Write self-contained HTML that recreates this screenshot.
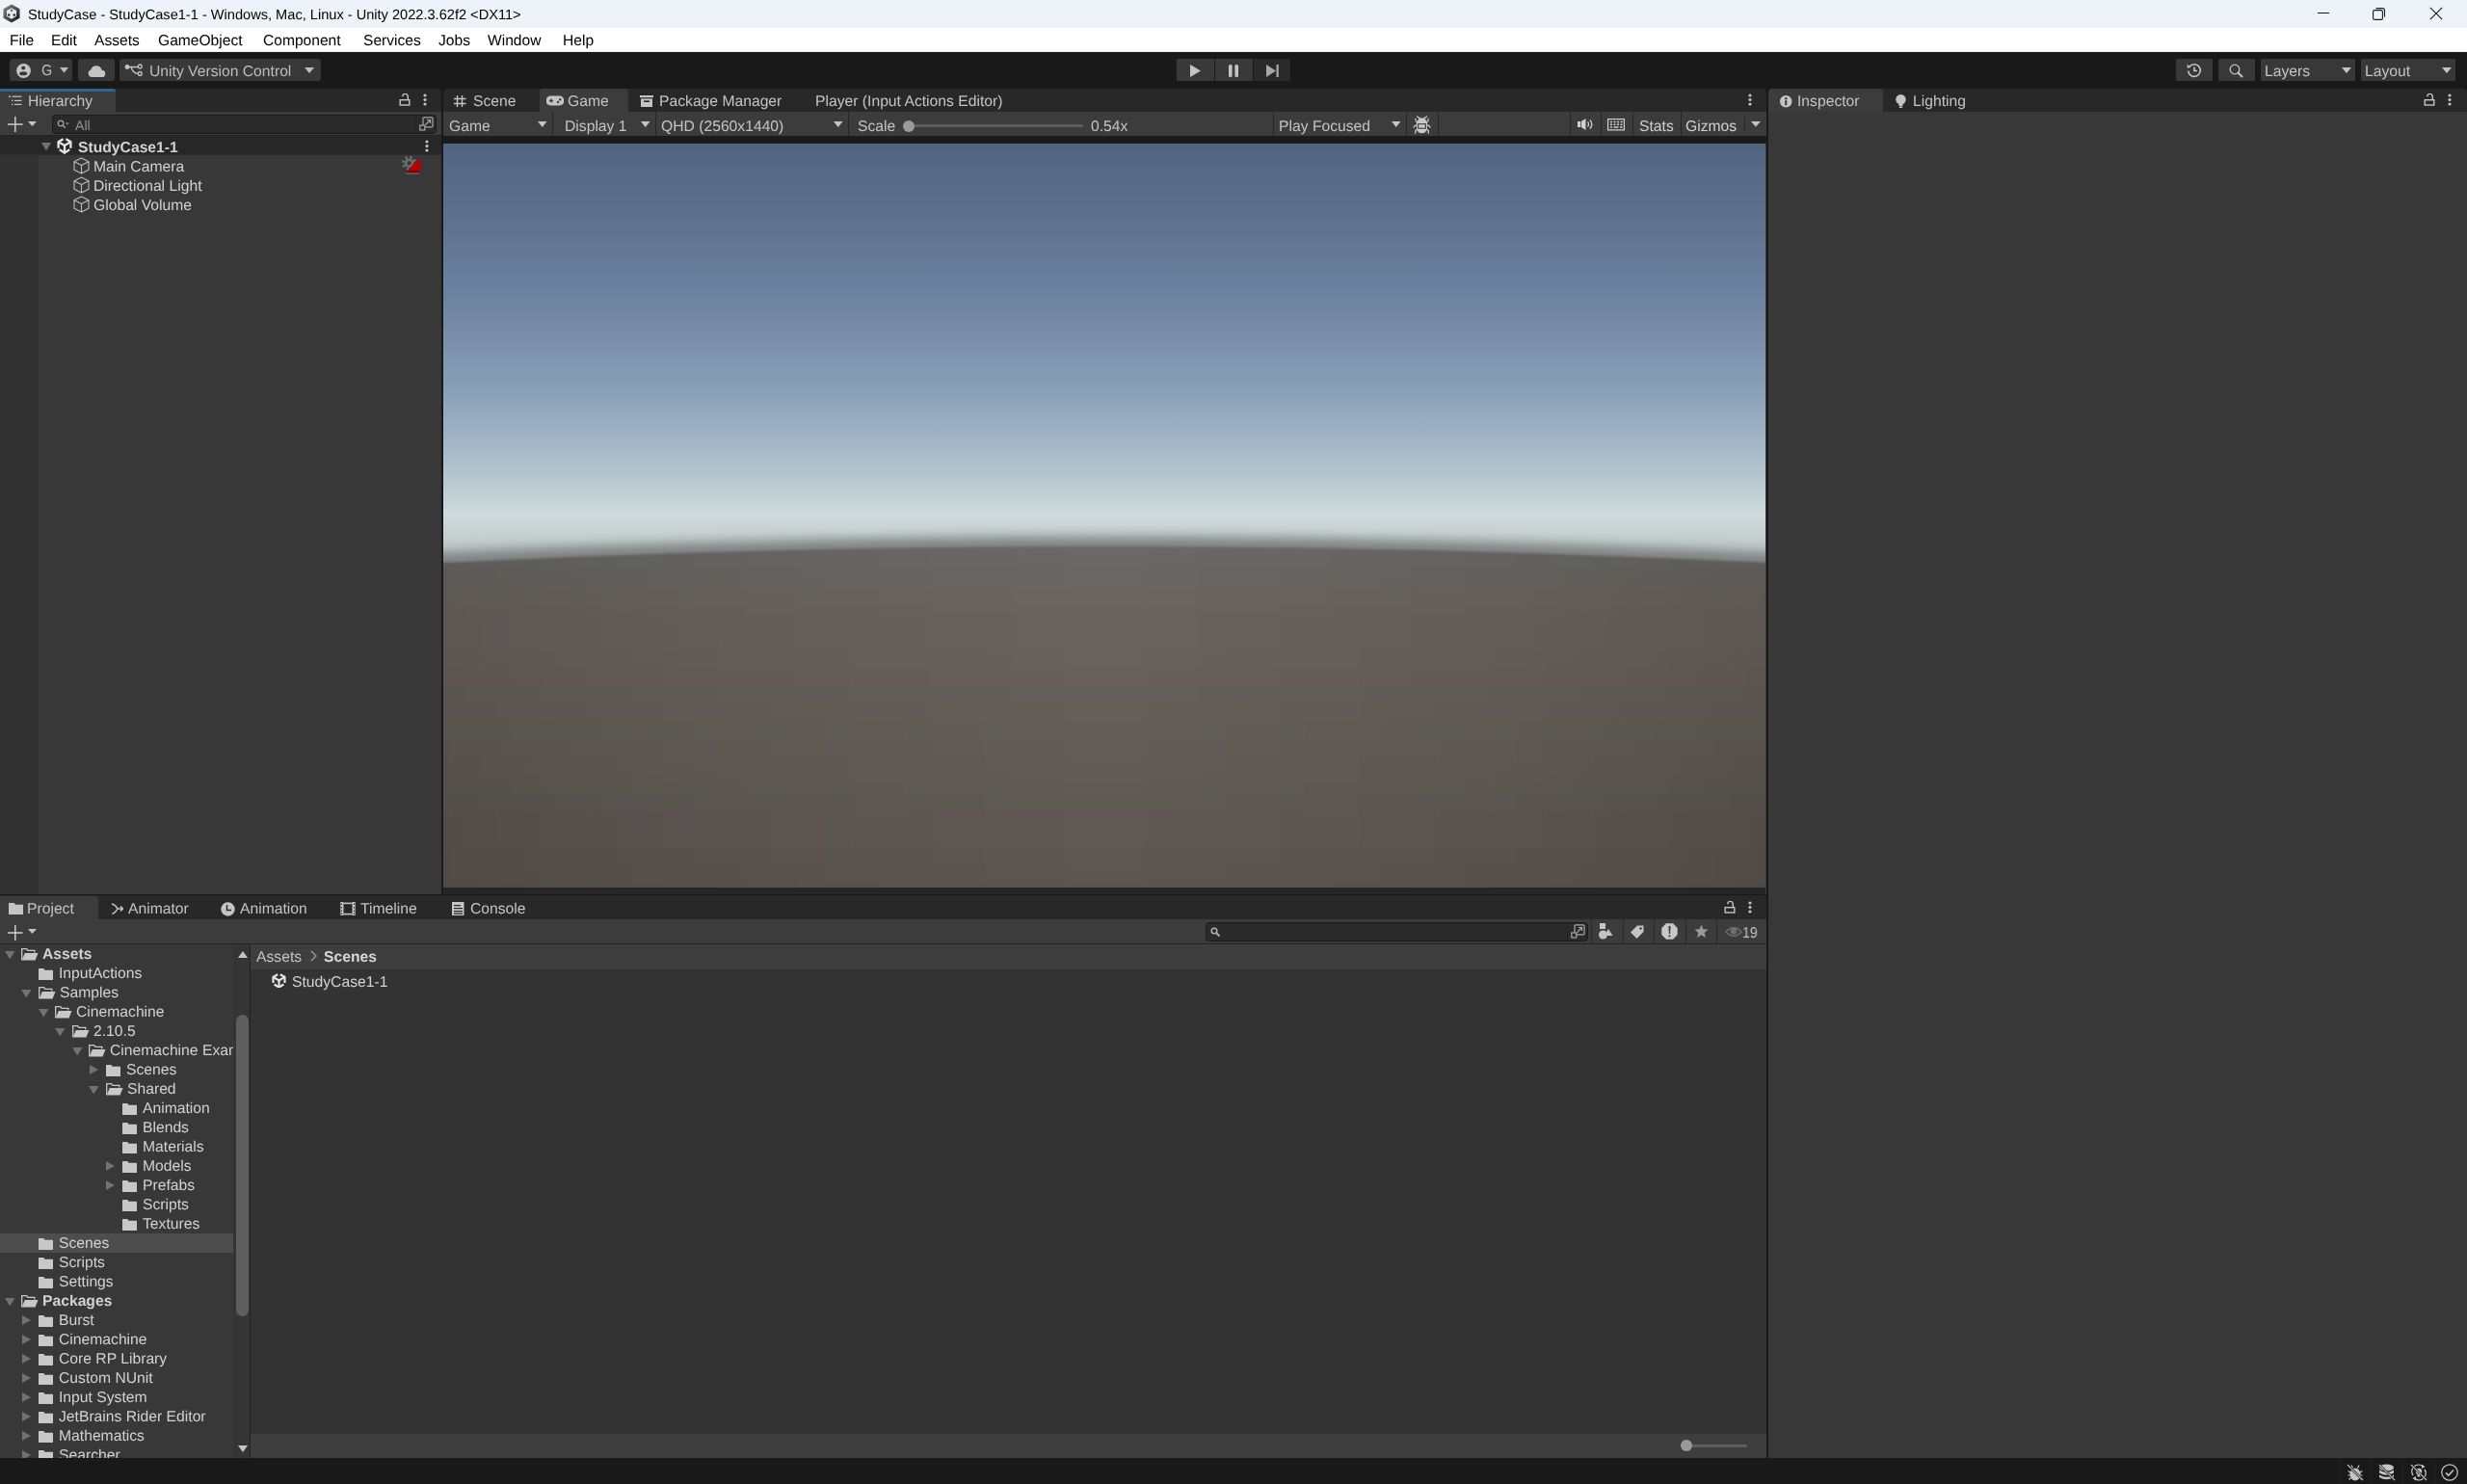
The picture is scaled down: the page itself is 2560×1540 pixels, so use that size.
<!DOCTYPE html><html><head><meta charset="utf-8"><title>Unity</title><style>
html,body{margin:0;padding:0;}
body{width:2560px;height:1540px;position:relative;overflow:hidden;background:#191919;font-family:"Liberation Sans",sans-serif;}
div,svg{position:absolute;box-sizing:border-box;}
.t{white-space:nowrap;text-rendering:geometricPrecision;will-change:transform;}
</style></head><body>
<div style="left:0px;top:0px;width:2560px;height:29px;background:#edf3f8;"></div>
<svg style="left:3px;top:4px;" width="18" height="20" viewBox="0 0 18 20"><defs><linearGradient id="lg" x1="0" y1="0" x2="1" y2="1"><stop offset="0" stop-color="#8a8a8a"/><stop offset="1" stop-color="#111"/></linearGradient></defs><path d="M9 0.5L17.5 5.3V14.7L9 19.5L0.5 14.7V5.3Z" fill="url(#lg)"/><path d="M9 4.2L14 7V12.8L9 15.7L4 12.8V7Z" fill="#e8e8e8"/><circle cx="9" cy="6.8" r="1.2" fill="#666"/><circle cx="6.2" cy="11.6" r="1.3" fill="#333"/><circle cx="11.8" cy="11.6" r="1.3" fill="#333"/></svg>
<div class="t" style="left:29px;top:1.5px;height:29px;line-height:29px;font-size:14.6px;color:#000;font-weight:normal;">StudyCase - StudyCase1-1 - Windows, Mac, Linux - Unity 2022.3.62f2 &lt;DX11&gt;</div>
<div style="left:2405px;top:13px;width:12px;height:1px;background:#1a1a1a;"></div>
<svg style="left:2462px;top:7px;" width="14" height="14" viewBox="0 0 14 14"><rect x="0.6" y="3.6" width="9.8" height="9.8" rx="1.5" fill="none" stroke="#1a1a1a" stroke-width="1.1"/><path d="M3.5 1.6H10.5A2 2 0 0 1 12.5 3.6V10.6" fill="none" stroke="#1a1a1a" stroke-width="1.1"/></svg>
<svg style="left:2521px;top:7px;" width="14" height="14" viewBox="0 0 14 14"><path d="M0.8 0.8L13.2 13.2M13.2 0.8L0.8 13.2" stroke="#1a1a1a" stroke-width="1.1"/></svg>
<div style="left:0px;top:29px;width:2560px;height:24px;background:#ffffff;"></div>
<div style="left:0px;top:53px;width:2560px;height:1px;background:#f0f0f0;"></div>
<div class="t" style="left:10px;top:30.5px;height:24px;line-height:24px;font-size:15.6px;color:#000;font-weight:normal;">File</div>
<div class="t" style="left:52.5px;top:30.5px;height:24px;line-height:24px;font-size:15.6px;color:#000;font-weight:normal;">Edit</div>
<div class="t" style="left:98px;top:30.5px;height:24px;line-height:24px;font-size:15.6px;color:#000;font-weight:normal;">Assets</div>
<div class="t" style="left:163.5px;top:30.5px;height:24px;line-height:24px;font-size:15.6px;color:#000;font-weight:normal;">GameObject</div>
<div class="t" style="left:272.5px;top:30.5px;height:24px;line-height:24px;font-size:15.6px;color:#000;font-weight:normal;">Component</div>
<div class="t" style="left:377px;top:30.5px;height:24px;line-height:24px;font-size:15.6px;color:#000;font-weight:normal;">Services</div>
<div class="t" style="left:455px;top:30.5px;height:24px;line-height:24px;font-size:15.6px;color:#000;font-weight:normal;">Jobs</div>
<div class="t" style="left:506px;top:30.5px;height:24px;line-height:24px;font-size:15.6px;color:#000;font-weight:normal;">Window</div>
<div class="t" style="left:584px;top:30.5px;height:24px;line-height:24px;font-size:15.6px;color:#000;font-weight:normal;">Help</div>
<div style="left:10px;top:61px;width:65px;height:23px;background:#383838;border-radius:3px"></div>
<svg style="left:16.5px;top:65.8px;" width="15" height="15" viewBox="0 0 15 15"><circle cx="7.5" cy="7.5" r="7.4" fill="#c4c4c4"/><circle cx="7.2" cy="4.6" r="2" fill="#383838"/><ellipse cx="7.2" cy="10.2" rx="4" ry="2" fill="#383838"/></svg>
<div class="t" style="left:42.5px;top:61.8px;height:23px;line-height:23px;font-size:15.7px;color:#c4c4c4;font-weight:normal;font-weight:normal;transform:scaleX(0.92);transform-origin:0 0">G</div>
<svg style="left:62px;top:70px;" width="9" height="5.5" viewBox="0 0 9 5.5"><path d="M0 0H9L4.5 5.5Z" fill="#bdbdbd"/></svg>
<div style="left:81px;top:61px;width:38px;height:23px;background:#383838;border-radius:3px"></div>
<svg style="left:91px;top:66.5px;" width="18.5" height="13.5" viewBox="0 0 18.5 13.5"><path d="M4 13A3.8 3.8 0 0 1 3.3 5.6A5.8 5.8 0 0 1 14.6 5.8A3.6 3.6 0 0 1 14.6 13Z" fill="#c4c4c4"/></svg>
<div style="left:124px;top:61px;width:209px;height:23px;background:#383838;border-radius:3px"></div>
<svg style="left:129px;top:64px;" width="20" height="16" viewBox="0 0 20 16"><circle cx="3" cy="5.5" r="2.4" fill="#c4c4c4"/><path d="M3 5.5H14.4M7 5.5Q9 12.4 14.4 12.4" fill="none" stroke="#c4c4c4" stroke-width="1.3"/><circle cx="16.3" cy="4.9" r="1.9" fill="none" stroke="#c4c4c4" stroke-width="1.3"/><circle cx="16.3" cy="12.4" r="1.9" fill="none" stroke="#c4c4c4" stroke-width="1.3"/></svg>
<div class="t" style="left:155px;top:62.5px;height:23px;line-height:23px;font-size:15.7px;color:#bdbdbd;font-weight:normal;">Unity Version Control</div>
<svg style="left:316px;top:70px;" width="10" height="6" viewBox="0 0 10 6"><path d="M0 0H10L5.0 6Z" fill="#bdbdbd"/></svg>
<div style="left:1221px;top:61px;width:39px;height:23px;background:#393939;"></div>
<div style="left:1261px;top:61px;width:39px;height:23px;background:#393939;"></div>
<div style="left:1301px;top:61px;width:38px;height:23px;background:#2a2a2a;"></div>
<svg style="left:1235px;top:67px;" width="11" height="13" viewBox="0 0 11 13"><path d="M0 0L11 6.5L0 13Z" fill="#c4c4c4"/></svg>
<svg style="left:1275px;top:67px;" width="10" height="13" viewBox="0 0 10 13"><rect x="0" y="0" width="3.6" height="13" rx="1.5" fill="#c4c4c4"/><rect x="6.4" y="0" width="3.6" height="13" rx="1.5" fill="#c4c4c4"/></svg>
<svg style="left:1314px;top:67px;" width="13" height="13" viewBox="0 0 13 13"><path d="M0 0L10 6.5L0 13Z" fill="#a8a8a8"/><rect x="10.5" y="0" width="2.3" height="13" fill="#a8a8a8"/></svg>
<div style="left:2258px;top:61px;width:38px;height:23px;background:#383838;border-radius:2px"></div>
<svg style="left:2269px;top:65px;" width="16" height="16" viewBox="0 0 16 16"><path d="M3 4.2A6.3 6.3 0 1 1 1.7 8.5" fill="none" stroke="#c4c4c4" stroke-width="1.6"/><path d="M0.5 1.5L4.2 5L0.8 5.8Z" fill="#c4c4c4"/><path d="M8 4.5V8.5H11" fill="none" stroke="#c4c4c4" stroke-width="1.6"/></svg>
<div style="left:2302px;top:61px;width:38px;height:23px;background:#383838;border-radius:2px"></div>
<svg style="left:2313px;top:66px;" width="16" height="16" viewBox="0 0 16 16"><circle cx="6" cy="6" r="4.8" fill="none" stroke="#c4c4c4" stroke-width="1.3"/><path d="M9.5 9.5L13.5 13.5" stroke="#c4c4c4" stroke-width="2" stroke-linecap="round"/></svg>
<div style="left:2346px;top:61px;width:98px;height:23px;background:#383838;border-radius:2px"></div>
<div class="t" style="left:2350px;top:62.5px;height:23px;line-height:23px;font-size:15.7px;color:#c4c4c4;font-weight:normal;">Layers</div>
<svg style="left:2430px;top:70px;" width="10" height="6" viewBox="0 0 10 6"><path d="M0 0H10L5.0 6Z" fill="#c4c4c4"/></svg>
<div style="left:2450px;top:61px;width:98px;height:23px;background:#383838;border-radius:2px"></div>
<div class="t" style="left:2454px;top:62.5px;height:23px;line-height:23px;font-size:15.7px;color:#c4c4c4;font-weight:normal;">Layout</div>
<svg style="left:2534px;top:70px;" width="10" height="6" viewBox="0 0 10 6"><path d="M0 0H10L5.0 6Z" fill="#c4c4c4"/></svg>
<div style="left:0px;top:92px;width:458px;height:836px;background:#383838;border-top-right-radius:5px;overflow:hidden"></div>
<div style="left:0px;top:92px;width:458px;height:24px;background:#282828;border-top-right-radius:5px"></div>
<div style="left:0px;top:92px;width:120px;height:24px;background:#3c3c3c;border-top-right-radius:4px"></div>
<div style="left:0px;top:92px;width:120px;height:3px;background:#2d6597;border-top-right-radius:3px"></div>
<svg style="left:9px;top:99px;" width="14" height="12" viewBox="0 0 14 12"><circle cx="1" cy="1.2" r="1" fill="#c4c4c4"/><rect x="3.5" y="0.6" width="10" height="1.2" fill="#c4c4c4"/><rect x="3" y="4.6" width="1.4" height="1.4" fill="#c4c4c4"/><rect x="6" y="4.8" width="7.5" height="1.2" fill="#c4c4c4"/><rect x="3" y="8.6" width="1.4" height="1.4" fill="#c4c4c4"/><rect x="6" y="8.8" width="7.5" height="1.2" fill="#c4c4c4"/></svg>
<div class="t" style="left:28.5px;top:93.5px;height:24px;line-height:24px;font-size:15.7px;color:#c4c4c4;font-weight:normal;">Hierarchy</div>
<svg style="left:414px;top:97px;" width="12" height="13" viewBox="0 0 12 13"><path d="M9.3 6.5V3.2A2.8 2.8 0 0 0 3.7 3.2" fill="none" stroke="#c4c4c4" stroke-width="1.4"/><rect x="1.2" y="6.7" width="9.6" height="5.3" fill="none" stroke="#c4c4c4" stroke-width="1.4"/></svg>
<svg style="left:439px;top:97px;" width="4" height="13" viewBox="0 0 4 13"><circle cx="2" cy="2" r="1.6" fill="#c4c4c4"/><circle cx="2" cy="6.5" r="1.6" fill="#c4c4c4"/><circle cx="2" cy="11" r="1.6" fill="#c4c4c4"/></svg>
<div style="left:0px;top:116px;width:458px;height:25px;background:#3c3c3c;"></div>
<div style="left:0px;top:140px;width:458px;height:1px;background:#232323;"></div>
<svg style="left:8px;top:121px;" width="16" height="16" viewBox="0 0 16 16"><rect x="7" y="0" width="1.6" height="16" fill="#c4c4c4"/><rect x="0" y="7.2" width="15.6" height="1.6" fill="#c4c4c4"/></svg>
<svg style="left:29px;top:126px;" width="9" height="5" viewBox="0 0 9 5"><path d="M0 0H9L4.5 5Z" fill="#c4c4c4"/></svg>
<div style="left:54px;top:119px;width:399px;height:20px;background:#2a2a2a;border:1px solid #1a1a1a;border-radius:4px"></div>
<div style="left:431px;top:120px;width:1px;height:18px;background:#232323;"></div>
<svg style="left:59.2px;top:124px;" width="13" height="11" viewBox="0 0 13 11"><circle cx="4" cy="4" r="2.8" fill="none" stroke="#a0a0a0" stroke-width="1.3"/><path d="M6 6L8.8 8.8" stroke="#a0a0a0" stroke-width="1.4"/><path d="M9 3.5H12.5L10.75 5.6Z" fill="#a0a0a0"/></svg>
<div class="t" style="left:77.5px;top:120.8px;height:20px;line-height:20px;font-size:14.2px;color:#909090;font-weight:normal;">All</div>
<svg style="left:435px;top:121px;" width="15" height="15" viewBox="0 0 15 15"><rect x="4" y="0.8" width="10" height="10" rx="1" fill="none" stroke="#a8a8a8" stroke-width="1.2"/><rect x="0.8" y="9" width="5" height="5" fill="#2a2a2a" stroke="#a8a8a8" stroke-width="1.2"/><path d="M6.5 8.5L11.5 3.5M8 3.5H11.5V7" fill="none" stroke="#a8a8a8" stroke-width="1.2"/></svg>
<div style="left:0px;top:141px;width:40px;height:787px;background:#313131;"></div>
<div style="left:0px;top:141px;width:458px;height:20px;background:#272727;"></div>
<div style="left:0px;top:160px;width:458px;height:1px;background:#2d2d2d;"></div>
<svg style="left:43px;top:148px;" width="10" height="8.5" viewBox="0 0 10 8.5"><path d="M0 0H10L5.0 8.5Z" fill="#727272"/></svg>
<svg style="left:59px;top:143.3px;" width="16" height="17.0" viewBox="0 0 16 17.0"><g transform="scale(1.0)" fill="none" stroke="#e6e6e6" stroke-width="2.3" stroke-linejoin="miter"><path d="M6.6 1.3L1.6 4.2V10.8"/><path d="M9.4 1.3L14.4 4.2V10.8"/><path d="M1.6 4.2L8 7.9L14.4 4.2"/><path d="M8 7.9V16.2"/><path d="M2.8 12.3L8 15.6L13.2 12.3"/></g></svg>
<div class="t" style="left:81px;top:143.5px;height:20px;line-height:20px;font-size:15.7px;color:#d2d2d2;font-weight:bold;">StudyCase1-1</div>
<svg style="left:441px;top:145px;" width="4" height="13" viewBox="0 0 4 13"><circle cx="2" cy="2" r="1.6" fill="#c4c4c4"/><circle cx="2" cy="6.5" r="1.6" fill="#c4c4c4"/><circle cx="2" cy="11" r="1.6" fill="#c4c4c4"/></svg>
<svg style="left:76px;top:163px;" width="17" height="18" viewBox="0 0 17 18"><path d="M8.5 1L16 4.8V13.2L8.5 17L1 13.2V4.8Z M1 4.8L8.5 8.6L16 4.8 M8.5 8.6V17" fill="none" stroke="#bcbcbc" stroke-width="1.1" stroke-linejoin="round"/></svg>
<div class="t" style="left:97px;top:163.5px;height:20px;line-height:20px;font-size:15.7px;color:#d2d2d2;font-weight:normal;">Main Camera</div>
<svg style="left:76px;top:183px;" width="17" height="18" viewBox="0 0 17 18"><path d="M8.5 1L16 4.8V13.2L8.5 17L1 13.2V4.8Z M1 4.8L8.5 8.6L16 4.8 M8.5 8.6V17" fill="none" stroke="#bcbcbc" stroke-width="1.1" stroke-linejoin="round"/></svg>
<div class="t" style="left:97px;top:183.5px;height:20px;line-height:20px;font-size:15.7px;color:#d2d2d2;font-weight:normal;">Directional Light</div>
<svg style="left:76px;top:203px;" width="17" height="18" viewBox="0 0 17 18"><path d="M8.5 1L16 4.8V13.2L8.5 17L1 13.2V4.8Z M1 4.8L8.5 8.6L16 4.8 M8.5 8.6V17" fill="none" stroke="#bcbcbc" stroke-width="1.1" stroke-linejoin="round"/></svg>
<div class="t" style="left:97px;top:203.5px;height:20px;line-height:20px;font-size:15.7px;color:#d2d2d2;font-weight:normal;">Global Volume</div>
<svg style="left:410px;top:158px;" width="40" height="28" viewBox="0 0 40 28"><circle cx="14.6" cy="11.2" r="4.8" fill="#6e6e6e"/><circle cx="14.6" cy="11.2" r="6.2" fill="none" stroke="#6e6e6e" stroke-width="2.6" stroke-dasharray="2.4 2.47"/><circle cx="14.6" cy="11.2" r="2.2" fill="#383838"/><path d="M11.5 21L23.6 7H25V11H27V18H25V21Z" fill="#b30000"/><path d="M12.5 20.2H24.5" stroke="#7a0000" stroke-width="1.6"/><rect x="11" y="21.5" width="13.5" height="1.4" fill="#6a6262"/></svg>
<div style="left:460px;top:92px;width:1373px;height:836px;background:#262626;border-top-left-radius:5px;border-top-right-radius:5px;overflow:hidden"></div>
<div style="left:460px;top:141px;width:1373px;height:8px;background:#1b1b1b;"></div>
<div style="left:460px;top:92px;width:1373px;height:24px;background:#282828;border-top-left-radius:5px;border-top-right-radius:5px"></div>
<div style="left:560px;top:92px;width:92px;height:24px;background:#3c3c3c;border-top-left-radius:4px;border-top-right-radius:4px"></div>
<svg style="left:471px;top:99px;" width="13" height="12" viewBox="0 0 13 12"><path d="M3.5 0V12M8.5 0V12M0 3.5H12.5M0 8.5H12.5" stroke="#c4c4c4" stroke-width="1.4"/></svg>
<div class="t" style="left:491px;top:93.5px;height:24px;line-height:24px;font-size:15.7px;color:#c4c4c4;font-weight:normal;">Scene</div>
<svg style="left:567px;top:99px;" width="18" height="11" viewBox="0 0 18 11"><path d="M4.5 0.5H13.5A4.5 4.5 0 0 1 13.5 10.5H4.5A4.5 4.5 0 0 1 4.5 0.5Z" fill="#c4c4c4"/><path d="M3 5.5H7M5 3.5V7.5" stroke="#3c3c3c" stroke-width="1.3"/><circle cx="12" cy="7" r="1.2" fill="#3c3c3c"/><circle cx="14.2" cy="4.3" r="1.2" fill="#3c3c3c"/></svg>
<div class="t" style="left:588.5px;top:93.5px;height:24px;line-height:24px;font-size:15.7px;color:#c4c4c4;font-weight:normal;">Game</div>
<svg style="left:664px;top:99px;" width="14" height="12" viewBox="0 0 14 12"><rect x="0" y="0" width="14" height="2.2" fill="#c4c4c4"/><path d="M1 3.4H13V12H1Z" fill="#c4c4c4"/><rect x="4" y="5.4" width="6" height="1.6" fill="#282828"/></svg>
<div class="t" style="left:683.5px;top:93.5px;height:24px;line-height:24px;font-size:15.7px;color:#c4c4c4;font-weight:normal;">Package Manager</div>
<div class="t" style="left:846px;top:93.5px;height:24px;line-height:24px;font-size:15.7px;color:#c4c4c4;font-weight:normal;">Player (Input Actions Editor)</div>
<svg style="left:1814px;top:97px;" width="4" height="13" viewBox="0 0 4 13"><circle cx="2" cy="2" r="1.6" fill="#c4c4c4"/><circle cx="2" cy="6.5" r="1.6" fill="#c4c4c4"/><circle cx="2" cy="11" r="1.6" fill="#c4c4c4"/></svg>
<div style="left:460px;top:116px;width:1373px;height:25px;background:#3c3c3c;"></div>
<div style="left:573px;top:116px;width:1px;height:25px;background:#262626;"></div>
<div style="left:680px;top:116px;width:1px;height:25px;background:#262626;"></div>
<div style="left:880px;top:116px;width:1px;height:25px;background:#262626;"></div>
<div style="left:1321px;top:116px;width:1px;height:25px;background:#262626;"></div>
<div style="left:1459px;top:116px;width:1px;height:25px;background:#262626;"></div>
<div style="left:1492px;top:116px;width:1px;height:25px;background:#262626;"></div>
<div style="left:1629px;top:116px;width:1px;height:25px;background:#262626;"></div>
<div style="left:1661px;top:116px;width:1px;height:25px;background:#262626;"></div>
<div style="left:1694px;top:116px;width:1px;height:25px;background:#262626;"></div>
<div style="left:1744px;top:116px;width:1px;height:25px;background:#262626;"></div>
<div class="t" style="left:465.5px;top:118.5px;height:25px;line-height:25px;font-size:15.7px;color:#c4c4c4;font-weight:normal;">Game</div>
<svg style="left:558px;top:126px;" width="9.5" height="6" viewBox="0 0 9.5 6"><path d="M0 0H9.5L4.75 6Z" fill="#c4c4c4"/></svg>
<div class="t" style="left:585.5px;top:118.5px;height:25px;line-height:25px;font-size:15.7px;color:#c4c4c4;font-weight:normal;">Display 1</div>
<svg style="left:665px;top:126px;" width="9.5" height="6" viewBox="0 0 9.5 6"><path d="M0 0H9.5L4.75 6Z" fill="#c4c4c4"/></svg>
<div class="t" style="left:685.5px;top:118.5px;height:25px;line-height:25px;font-size:15.7px;color:#c4c4c4;font-weight:normal;">QHD (2560x1440)</div>
<svg style="left:865px;top:126px;" width="9.5" height="6" viewBox="0 0 9.5 6"><path d="M0 0H9.5L4.75 6Z" fill="#c4c4c4"/></svg>
<div class="t" style="left:889.5px;top:118.5px;height:25px;line-height:25px;font-size:15.7px;color:#c4c4c4;font-weight:normal;">Scale</div>
<div style="left:946px;top:129px;width:178px;height:3px;background:#5e5e5e;border-radius:1.5px"></div>
<svg style="left:937px;top:124.5px;" width="12" height="12" viewBox="0 0 12 12"><circle cx="6" cy="6" r="6" fill="#9a9a9a"/></svg>
<div class="t" style="left:1132px;top:118.5px;height:25px;line-height:25px;font-size:15.7px;color:#c4c4c4;font-weight:normal;">0.54x</div>
<div class="t" style="left:1327px;top:118.5px;height:25px;line-height:25px;font-size:15.7px;color:#c4c4c4;font-weight:normal;">Play Focused</div>
<svg style="left:1444px;top:126px;" width="9.5" height="6" viewBox="0 0 9.5 6"><path d="M0 0H9.5L4.75 6Z" fill="#c4c4c4"/></svg>
<svg style="left:1465.5px;top:119.5px;" width="19" height="19" viewBox="0 0 19 19"><path d="M6.8 2.4H12.3L15 7V13A5.5 5.2 0 0 1 4 13V7Z" fill="#c8c8c8"/><path d="M4.6 0.9L7.2 2.8M14.5 0.9L11.9 2.8M2.9 3.3Q3.1 6 4.4 7M16.2 3.3Q16 6 14.7 7M1 12.2Q1.8 10 4 10M18.1 12.2Q17.3 10 15.1 10M2.8 18.2V15.5L4.2 14.5M16.3 18.2V15.5L14.9 14.5" fill="none" stroke="#c8c8c8" stroke-width="1.3" stroke-linecap="round"/><rect x="5.6" y="8.7" width="7.8" height="4.5" fill="none" stroke="#3c3c3c" stroke-width="1.1"/></svg>
<svg style="left:1637px;top:123px;" width="16" height="12" viewBox="0 0 16 12"><rect x="0" y="3" width="3" height="6" fill="#d0d0d0"/><path d="M3.8 3L8.5 0V12L3.8 9Z" fill="#d0d0d0"/><path d="M10.5 3.5A3.5 3.5 0 0 1 10.5 8.5M12.8 1.5A6 6 0 0 1 12.8 10.5" fill="none" stroke="#d0d0d0" stroke-width="1.3"/></svg>
<svg style="left:1668px;top:123px;" width="18" height="12.5" viewBox="0 0 18 12.5"><rect x="0.6" y="0.6" width="16.8" height="11.3" fill="none" stroke="#d0d0d0" stroke-width="1.2"/><path d="M3 3.5H5M6.5 3.5H8.5M10 3.5H12M13.5 3.5H15.5M3 6.2H5M6.5 6.2H8.5M10 6.2H12M13.5 6.2H15.5M3 9H5M6.5 9H11.5M13 9H15.5" stroke="#d0d0d0" stroke-width="1.5"/></svg>
<div class="t" style="left:1700.5px;top:118.5px;height:25px;line-height:25px;font-size:15.7px;color:#d0d0d0;font-weight:normal;">Stats</div>
<div class="t" style="left:1749px;top:118.5px;height:25px;line-height:25px;font-size:15.7px;color:#d0d0d0;font-weight:normal;">Gizmos</div>
<div style="left:1810px;top:121px;width:1px;height:15px;background:#2a2a2a;"></div>
<svg style="left:1816.5px;top:126px;" width="10" height="5.5" viewBox="0 0 10 5.5"><path d="M0 0H10L5.0 5.5Z" fill="#c4c4c4"/></svg>
<svg style="left:460px;top:149px" width="1372" height="772" viewBox="0 0 1372 772"><defs><linearGradient id="sky" x1="0" y1="0" x2="0" y2="1" gradientUnits="objectBoundingBox"><stop offset="0" stop-color="#516582"/><stop offset="0.105" stop-color="#5e7290"/><stop offset="0.202" stop-color="#6d82a0"/><stop offset="0.26" stop-color="#7a8eaa"/><stop offset="0.332" stop-color="#8aa0b7"/><stop offset="0.396" stop-color="#a1b3c5"/><stop offset="0.455" stop-color="#b9c9d1"/><stop offset="0.5" stop-color="#d0dbdc"/><stop offset="0.519" stop-color="#c8d2d2"/><stop offset="0.571" stop-color="#b8c0bf"/><stop offset="1" stop-color="#a0a4a4"/></linearGradient><linearGradient id="ground" x1="0" y1="0" x2="0" y2="1"><stop offset="0" stop-color="#6c6867"/><stop offset="0.1" stop-color="#6b6662"/><stop offset="0.37" stop-color="#67615c"/><stop offset="0.92" stop-color="#5c5650"/><stop offset="1" stop-color="#5a544e"/></linearGradient><linearGradient id="hvig" x1="0" y1="0" x2="1" y2="0"><stop offset="0" stop-color="#000" stop-opacity="0.13"/><stop offset="0.2" stop-color="#000" stop-opacity="0.06"/><stop offset="0.5" stop-color="#000" stop-opacity="0"/><stop offset="0.8" stop-color="#000" stop-opacity="0.06"/><stop offset="1" stop-color="#000" stop-opacity="0.13"/></linearGradient><filter id="bl" x="-5%" y="-5%" width="110%" height="110%"><feGaussianBlur stdDeviation="0.8"/></filter><filter id="bl2" x="-5%" y="-20%" width="110%" height="140%"><feGaussianBlur stdDeviation="6"/></filter></defs><rect width="1372" height="772" fill="url(#sky)"/><path d="M-40 426 Q686 390 1413 426 V792 H-40Z" fill="#727777" opacity="0.85" filter="url(#bl2)"/><path d="M-20 436 Q686 400 1393 436 V792 H-20Z" fill="url(#ground)" filter="url(#bl)"/><path d="M-20 436 Q686 400 1393 436 V792 H-20Z" fill="url(#hvig)" filter="url(#bl)"/></svg>
<div style="left:1832px;top:149px;width:1px;height:779px;background:#383838;"></div>
<div style="left:0px;top:929px;width:1833px;height:584px;background:#333333;border-top-right-radius:5px;overflow:hidden"></div>
<div style="left:0px;top:929px;width:1833px;height:25px;background:#282828;border-top-right-radius:5px"></div>
<div style="left:0px;top:930px;width:102px;height:24px;background:#3c3c3c;border-top-right-radius:4px"></div>
<svg style="left:8.5px;top:937px;" width="15" height="12" viewBox="0 0 15 12"><path d="M0 0H5.5L7 1.8H15V12H0Z" fill="#c4c4c4"/></svg>
<div class="t" style="left:28.4px;top:931.5px;height:24px;line-height:24px;font-size:15.7px;color:#c4c4c4;font-weight:normal;">Project</div>
<svg style="left:114.5px;top:937px;" width="13" height="12" viewBox="0 0 13 12"><path d="M1 1Q5 2 7 6Q5 10 1.5 11.5M7 6H12M10 3.5L12.5 6L10 8.5" fill="none" stroke="#c4c4c4" stroke-width="1.5"/></svg>
<div class="t" style="left:132.8px;top:931.5px;height:24px;line-height:24px;font-size:15.7px;color:#c4c4c4;font-weight:normal;">Animator</div>
<svg style="left:228.5px;top:935.5px;" width="15" height="15" viewBox="0 0 15 15"><circle cx="7.5" cy="7.5" r="7.2" fill="#c4c4c4"/><path d="M6.5 3V8.5H11" fill="none" stroke="#282828" stroke-width="1.5"/></svg>
<div class="t" style="left:249px;top:931.5px;height:24px;line-height:24px;font-size:15.7px;color:#c4c4c4;font-weight:normal;">Animation</div>
<svg style="left:353px;top:935.5px;" width="16" height="14" viewBox="0 0 16 14"><rect x="0.3" y="0" width="3.2" height="14" fill="#c4c4c4"/><rect x="12.5" y="0" width="3.2" height="14" fill="#c4c4c4"/><path d="M1.4 1.5V3M1.4 5V6.5M1.4 8.5V10M1.4 11.5V13M14.6 1.5V3M14.6 5V6.5M14.6 8.5V10M14.6 11.5V13" stroke="#282828" stroke-width="1"/><rect x="3.5" y="0.6" width="9" height="1.6" fill="#c4c4c4"/><rect x="3.5" y="11.8" width="9" height="1.6" fill="#c4c4c4"/></svg>
<div class="t" style="left:373.6px;top:931.5px;height:24px;line-height:24px;font-size:15.7px;color:#c4c4c4;font-weight:normal;">Timeline</div>
<svg style="left:468.5px;top:935.5px;" width="13" height="14" viewBox="0 0 13 14"><rect x="0" y="0" width="12.5" height="14" fill="#c4c4c4"/><path d="M2 3.6H9M2 6.6H11M2 9.6H11M2 12.2H11" stroke="#282828" stroke-width="1.2"/></svg>
<div class="t" style="left:487.5px;top:931.5px;height:24px;line-height:24px;font-size:15.7px;color:#c4c4c4;font-weight:normal;">Console</div>
<svg style="left:1789px;top:935px;" width="12" height="13" viewBox="0 0 12 13"><path d="M9.3 6.5V3.2A2.8 2.8 0 0 0 3.7 3.2" fill="none" stroke="#c4c4c4" stroke-width="1.4"/><rect x="1.2" y="6.7" width="9.6" height="5.3" fill="none" stroke="#c4c4c4" stroke-width="1.4"/></svg>
<svg style="left:1814px;top:935px;" width="4" height="13" viewBox="0 0 4 13"><circle cx="2" cy="2" r="1.6" fill="#c4c4c4"/><circle cx="2" cy="6.5" r="1.6" fill="#c4c4c4"/><circle cx="2" cy="11" r="1.6" fill="#c4c4c4"/></svg>
<div style="left:0px;top:954px;width:1833px;height:25px;background:#3c3c3c;"></div>
<div style="left:0px;top:979px;width:1833px;height:1px;background:#232323;"></div>
<svg style="left:8px;top:959.5px;" width="16" height="16" viewBox="0 0 16 16"><rect x="7" y="0" width="1.6" height="16" fill="#c4c4c4"/><rect x="0" y="7.2" width="15.6" height="1.6" fill="#c4c4c4"/></svg>
<svg style="left:29px;top:964px;" width="9" height="5" viewBox="0 0 9 5"><path d="M0 0H9L4.5 5Z" fill="#c4c4c4"/></svg>
<div style="left:1251px;top:957px;width:397px;height:20px;background:#2a2a2a;border:1px solid #1a1a1a;border-radius:4px"></div>
<div style="left:1626px;top:958px;width:1px;height:18px;background:#232323;"></div>
<svg style="left:1256px;top:962px;" width="11" height="11" viewBox="0 0 11 11"><circle cx="4" cy="4" r="2.8" fill="none" stroke="#b0b0b0" stroke-width="1.5"/><path d="M6 6L9.5 9.5" stroke="#b0b0b0" stroke-width="1.8"/></svg>
<svg style="left:1630px;top:959px;" width="15" height="15" viewBox="0 0 15 15"><rect x="4" y="0.8" width="10" height="10" rx="1" fill="none" stroke="#a8a8a8" stroke-width="1.2"/><rect x="0.8" y="9" width="5" height="5" fill="#2a2a2a" stroke="#a8a8a8" stroke-width="1.2"/><path d="M6.5 8.5L11.5 3.5M8 3.5H11.5V7" fill="none" stroke="#a8a8a8" stroke-width="1.2"/></svg>
<div style="left:1651px;top:954px;width:1px;height:25px;background:#2a2a2a;"></div>
<div style="left:1684px;top:954px;width:1px;height:25px;background:#2a2a2a;"></div>
<div style="left:1716px;top:954px;width:1px;height:25px;background:#2a2a2a;"></div>
<div style="left:1749px;top:954px;width:1px;height:25px;background:#2a2a2a;"></div>
<div style="left:1781px;top:954px;width:1px;height:25px;background:#2a2a2a;"></div>
<svg style="left:1659px;top:958px;" width="15" height="17" viewBox="0 0 15 17"><rect x="1" y="0" width="6" height="6" fill="#c4c4c4"/><circle cx="4.5" cy="12" r="4.5" fill="#c4c4c4"/><path d="M10 6L14.5 13H5.5Z" fill="#c4c4c4"/></svg>
<svg style="left:1692px;top:960px;" width="14" height="14" viewBox="0 0 14 14"><path d="M7 0.5H13.5V7L6.5 14L0 7.5Z" fill="#c4c4c4"/><circle cx="10.5" cy="3.5" r="1.2" fill="#3c3c3c"/></svg>
<svg style="left:1723.5px;top:958px;" width="17" height="17" viewBox="0 0 17 17"><path d="M5 0.3H12L16.7 5V12L12 16.7H5L0.3 12V5Z" fill="#c8c8c8"/><path d="M7.4 3H9.6L9.1 11H7.9Z" fill="#3c3c3c"/><circle cx="8.5" cy="13.3" r="1.15" fill="#3c3c3c"/></svg>
<svg style="left:1757.5px;top:959px;" width="15" height="15" viewBox="0 0 15 15"><path d="M7.5 0.5L9.4 5.3L14.5 5.6L10.6 8.9L11.9 14L7.5 11.2L3.1 14L4.4 8.9L0.5 5.6L5.6 5.3Z" fill="#9a9a9a"/></svg>
<svg style="left:1789.5px;top:961px;" width="18" height="12" viewBox="0 0 18 12"><path d="M0.8 6Q9 -2.5 17.2 6Q9 14.5 0.8 6Z" fill="none" stroke="#6e6e6e" stroke-width="1.3"/><circle cx="9" cy="5.2" r="3.4" fill="#6e6e6e"/></svg>
<div class="t" style="left:1808px;top:956.0px;height:25px;line-height:25px;font-size:15.7px;color:#c4c4c4;font-weight:normal;transform:scaleX(0.9);transform-origin:0 0">19</div>
<div style="left:0px;top:980px;width:242px;height:533px;background:#383838;"></div>
<div style="left:242px;top:980px;width:17px;height:533px;background:#353535;"></div>
<div style="left:259px;top:980px;width:1px;height:533px;background:#222222;"></div>
<svg style="left:247px;top:987px;" width="10" height="7" viewBox="0 0 10 7"><path d="M0 7L5 0L10 7Z" fill="#c4c4c4"/></svg>
<svg style="left:247px;top:1499.5px;" width="10" height="7" viewBox="0 0 10 7"><path d="M0 0L5 7L10 0Z" fill="#c4c4c4"/></svg>
<div style="left:245px;top:1053px;width:13px;height:313px;background:#5e5e5e;border-radius:6.5px"></div>
<div style="left:0;top:980px;width:242px;height:533px;overflow:hidden">
<svg style="left:4.5px;top:6.5px;" width="10.5" height="8.5" viewBox="0 0 10.5 8.5"><path d="M0 0H10.5L5.25 8.5Z" fill="#727272"/></svg>
<svg style="left:22.0px;top:4px;" width="18" height="13" viewBox="0 0 18 13"><path d="M0.7 12.3V0.7H5.5L7 2.3H13.8V4.5" fill="none" stroke="#c8c8c8" stroke-width="1.3"/><path d="M0.7 12.5L3.8 5H17.5L14.5 12.5Z" fill="#c8c8c8"/></svg>
<div class="t" style="left:44.0px;top:1.2px;height:20px;line-height:20px;font-size:15.7px;color:#d2d2d2;font-weight:bold;">Assets</div>
<svg style="left:39.5px;top:24.5px;" width="15" height="12" viewBox="0 0 15 12"><path d="M0 0.5Q0 0 0.5 0H5.2L6.6 1.8H14.5Q15 1.8 15 2.3V11.5Q15 12 14.5 12H0.5Q0 12 0 11.5Z" fill="#c8c8c8"/></svg>
<div class="t" style="left:60.5px;top:21.2px;height:20px;line-height:20px;font-size:15.7px;color:#d2d2d2;font-weight:normal;">InputActions</div>
<svg style="left:22.0px;top:46.5px;" width="10.5" height="8.5" viewBox="0 0 10.5 8.5"><path d="M0 0H10.5L5.25 8.5Z" fill="#727272"/></svg>
<svg style="left:39.5px;top:44px;" width="18" height="13" viewBox="0 0 18 13"><path d="M0.7 12.3V0.7H5.5L7 2.3H13.8V4.5" fill="none" stroke="#c8c8c8" stroke-width="1.3"/><path d="M0.7 12.5L3.8 5H17.5L14.5 12.5Z" fill="#c8c8c8"/></svg>
<div class="t" style="left:61.5px;top:41.2px;height:20px;line-height:20px;font-size:15.7px;color:#d2d2d2;font-weight:normal;">Samples</div>
<svg style="left:39.5px;top:66.5px;" width="10.5" height="8.5" viewBox="0 0 10.5 8.5"><path d="M0 0H10.5L5.25 8.5Z" fill="#727272"/></svg>
<svg style="left:57.0px;top:64px;" width="18" height="13" viewBox="0 0 18 13"><path d="M0.7 12.3V0.7H5.5L7 2.3H13.8V4.5" fill="none" stroke="#c8c8c8" stroke-width="1.3"/><path d="M0.7 12.5L3.8 5H17.5L14.5 12.5Z" fill="#c8c8c8"/></svg>
<div class="t" style="left:79.0px;top:61.2px;height:20px;line-height:20px;font-size:15.7px;color:#d2d2d2;font-weight:normal;">Cinemachine</div>
<svg style="left:57.0px;top:86.5px;" width="10.5" height="8.5" viewBox="0 0 10.5 8.5"><path d="M0 0H10.5L5.25 8.5Z" fill="#727272"/></svg>
<svg style="left:74.5px;top:84px;" width="18" height="13" viewBox="0 0 18 13"><path d="M0.7 12.3V0.7H5.5L7 2.3H13.8V4.5" fill="none" stroke="#c8c8c8" stroke-width="1.3"/><path d="M0.7 12.5L3.8 5H17.5L14.5 12.5Z" fill="#c8c8c8"/></svg>
<div class="t" style="left:96.5px;top:81.2px;height:20px;line-height:20px;font-size:15.7px;color:#d2d2d2;font-weight:normal;">2.10.5</div>
<svg style="left:74.5px;top:106.5px;" width="10.5" height="8.5" viewBox="0 0 10.5 8.5"><path d="M0 0H10.5L5.25 8.5Z" fill="#727272"/></svg>
<svg style="left:92.0px;top:104px;" width="18" height="13" viewBox="0 0 18 13"><path d="M0.7 12.3V0.7H5.5L7 2.3H13.8V4.5" fill="none" stroke="#c8c8c8" stroke-width="1.3"/><path d="M0.7 12.5L3.8 5H17.5L14.5 12.5Z" fill="#c8c8c8"/></svg>
<div class="t" style="left:114.0px;top:101.2px;height:20px;line-height:20px;font-size:15.7px;color:#d2d2d2;font-weight:normal;">Cinemachine Example</div>
<svg style="left:92.5px;top:125px;" width="9" height="10" viewBox="0 0 9 10"><path d="M0 0L9 5L0 10Z" fill="#727272"/></svg>
<svg style="left:109.5px;top:124.5px;" width="15" height="12" viewBox="0 0 15 12"><path d="M0 0.5Q0 0 0.5 0H5.2L6.6 1.8H14.5Q15 1.8 15 2.3V11.5Q15 12 14.5 12H0.5Q0 12 0 11.5Z" fill="#c8c8c8"/></svg>
<div class="t" style="left:130.5px;top:121.2px;height:20px;line-height:20px;font-size:15.7px;color:#d2d2d2;font-weight:normal;">Scenes</div>
<svg style="left:92.0px;top:146.5px;" width="10.5" height="8.5" viewBox="0 0 10.5 8.5"><path d="M0 0H10.5L5.25 8.5Z" fill="#727272"/></svg>
<svg style="left:109.5px;top:144px;" width="18" height="13" viewBox="0 0 18 13"><path d="M0.7 12.3V0.7H5.5L7 2.3H13.8V4.5" fill="none" stroke="#c8c8c8" stroke-width="1.3"/><path d="M0.7 12.5L3.8 5H17.5L14.5 12.5Z" fill="#c8c8c8"/></svg>
<div class="t" style="left:131.5px;top:141.2px;height:20px;line-height:20px;font-size:15.7px;color:#d2d2d2;font-weight:normal;">Shared</div>
<svg style="left:127.0px;top:164.5px;" width="15" height="12" viewBox="0 0 15 12"><path d="M0 0.5Q0 0 0.5 0H5.2L6.6 1.8H14.5Q15 1.8 15 2.3V11.5Q15 12 14.5 12H0.5Q0 12 0 11.5Z" fill="#c8c8c8"/></svg>
<div class="t" style="left:148.0px;top:161.2px;height:20px;line-height:20px;font-size:15.7px;color:#d2d2d2;font-weight:normal;">Animation</div>
<svg style="left:127.0px;top:184.5px;" width="15" height="12" viewBox="0 0 15 12"><path d="M0 0.5Q0 0 0.5 0H5.2L6.6 1.8H14.5Q15 1.8 15 2.3V11.5Q15 12 14.5 12H0.5Q0 12 0 11.5Z" fill="#c8c8c8"/></svg>
<div class="t" style="left:148.0px;top:181.2px;height:20px;line-height:20px;font-size:15.7px;color:#d2d2d2;font-weight:normal;">Blends</div>
<svg style="left:127.0px;top:204.5px;" width="15" height="12" viewBox="0 0 15 12"><path d="M0 0.5Q0 0 0.5 0H5.2L6.6 1.8H14.5Q15 1.8 15 2.3V11.5Q15 12 14.5 12H0.5Q0 12 0 11.5Z" fill="#c8c8c8"/></svg>
<div class="t" style="left:148.0px;top:201.2px;height:20px;line-height:20px;font-size:15.7px;color:#d2d2d2;font-weight:normal;">Materials</div>
<svg style="left:110.0px;top:225px;" width="9" height="10" viewBox="0 0 9 10"><path d="M0 0L9 5L0 10Z" fill="#727272"/></svg>
<svg style="left:127.0px;top:224.5px;" width="15" height="12" viewBox="0 0 15 12"><path d="M0 0.5Q0 0 0.5 0H5.2L6.6 1.8H14.5Q15 1.8 15 2.3V11.5Q15 12 14.5 12H0.5Q0 12 0 11.5Z" fill="#c8c8c8"/></svg>
<div class="t" style="left:148.0px;top:221.2px;height:20px;line-height:20px;font-size:15.7px;color:#d2d2d2;font-weight:normal;">Models</div>
<svg style="left:110.0px;top:245px;" width="9" height="10" viewBox="0 0 9 10"><path d="M0 0L9 5L0 10Z" fill="#727272"/></svg>
<svg style="left:127.0px;top:244.5px;" width="15" height="12" viewBox="0 0 15 12"><path d="M0 0.5Q0 0 0.5 0H5.2L6.6 1.8H14.5Q15 1.8 15 2.3V11.5Q15 12 14.5 12H0.5Q0 12 0 11.5Z" fill="#c8c8c8"/></svg>
<div class="t" style="left:148.0px;top:241.2px;height:20px;line-height:20px;font-size:15.7px;color:#d2d2d2;font-weight:normal;">Prefabs</div>
<svg style="left:127.0px;top:264.5px;" width="15" height="12" viewBox="0 0 15 12"><path d="M0 0.5Q0 0 0.5 0H5.2L6.6 1.8H14.5Q15 1.8 15 2.3V11.5Q15 12 14.5 12H0.5Q0 12 0 11.5Z" fill="#c8c8c8"/></svg>
<div class="t" style="left:148.0px;top:261.2px;height:20px;line-height:20px;font-size:15.7px;color:#d2d2d2;font-weight:normal;">Scripts</div>
<svg style="left:127.0px;top:284.5px;" width="15" height="12" viewBox="0 0 15 12"><path d="M0 0.5Q0 0 0.5 0H5.2L6.6 1.8H14.5Q15 1.8 15 2.3V11.5Q15 12 14.5 12H0.5Q0 12 0 11.5Z" fill="#c8c8c8"/></svg>
<div class="t" style="left:148.0px;top:281.2px;height:20px;line-height:20px;font-size:15.7px;color:#d2d2d2;font-weight:normal;">Textures</div>
<div style="left:0px;top:300px;width:242px;height:20px;background:#4d4d4d;"></div>
<svg style="left:39.5px;top:304.5px;" width="15" height="12" viewBox="0 0 15 12"><path d="M0 0.5Q0 0 0.5 0H5.2L6.6 1.8H14.5Q15 1.8 15 2.3V11.5Q15 12 14.5 12H0.5Q0 12 0 11.5Z" fill="#c8c8c8"/></svg>
<div class="t" style="left:60.5px;top:301.2px;height:20px;line-height:20px;font-size:15.7px;color:#d2d2d2;font-weight:normal;">Scenes</div>
<svg style="left:39.5px;top:324.5px;" width="15" height="12" viewBox="0 0 15 12"><path d="M0 0.5Q0 0 0.5 0H5.2L6.6 1.8H14.5Q15 1.8 15 2.3V11.5Q15 12 14.5 12H0.5Q0 12 0 11.5Z" fill="#c8c8c8"/></svg>
<div class="t" style="left:60.5px;top:321.2px;height:20px;line-height:20px;font-size:15.7px;color:#d2d2d2;font-weight:normal;">Scripts</div>
<svg style="left:39.5px;top:344.5px;" width="15" height="12" viewBox="0 0 15 12"><path d="M0 0.5Q0 0 0.5 0H5.2L6.6 1.8H14.5Q15 1.8 15 2.3V11.5Q15 12 14.5 12H0.5Q0 12 0 11.5Z" fill="#c8c8c8"/></svg>
<div class="t" style="left:60.5px;top:341.2px;height:20px;line-height:20px;font-size:15.7px;color:#d2d2d2;font-weight:normal;">Settings</div>
<svg style="left:4.5px;top:366.5px;" width="10.5" height="8.5" viewBox="0 0 10.5 8.5"><path d="M0 0H10.5L5.25 8.5Z" fill="#727272"/></svg>
<svg style="left:22.0px;top:364px;" width="18" height="13" viewBox="0 0 18 13"><path d="M0.7 12.3V0.7H5.5L7 2.3H13.8V4.5" fill="none" stroke="#c8c8c8" stroke-width="1.3"/><path d="M0.7 12.5L3.8 5H17.5L14.5 12.5Z" fill="#c8c8c8"/></svg>
<div class="t" style="left:44.0px;top:361.2px;height:20px;line-height:20px;font-size:15.7px;color:#d2d2d2;font-weight:bold;">Packages</div>
<svg style="left:22.5px;top:385px;" width="9" height="10" viewBox="0 0 9 10"><path d="M0 0L9 5L0 10Z" fill="#727272"/></svg>
<svg style="left:39.5px;top:384.5px;" width="15" height="12" viewBox="0 0 15 12"><path d="M0 0.5Q0 0 0.5 0H5.2L6.6 1.8H14.5Q15 1.8 15 2.3V11.5Q15 12 14.5 12H0.5Q0 12 0 11.5Z" fill="#c8c8c8"/></svg>
<div class="t" style="left:60.5px;top:381.2px;height:20px;line-height:20px;font-size:15.7px;color:#d2d2d2;font-weight:normal;">Burst</div>
<svg style="left:22.5px;top:405px;" width="9" height="10" viewBox="0 0 9 10"><path d="M0 0L9 5L0 10Z" fill="#727272"/></svg>
<svg style="left:39.5px;top:404.5px;" width="15" height="12" viewBox="0 0 15 12"><path d="M0 0.5Q0 0 0.5 0H5.2L6.6 1.8H14.5Q15 1.8 15 2.3V11.5Q15 12 14.5 12H0.5Q0 12 0 11.5Z" fill="#c8c8c8"/></svg>
<div class="t" style="left:60.5px;top:401.2px;height:20px;line-height:20px;font-size:15.7px;color:#d2d2d2;font-weight:normal;">Cinemachine</div>
<svg style="left:22.5px;top:425px;" width="9" height="10" viewBox="0 0 9 10"><path d="M0 0L9 5L0 10Z" fill="#727272"/></svg>
<svg style="left:39.5px;top:424.5px;" width="15" height="12" viewBox="0 0 15 12"><path d="M0 0.5Q0 0 0.5 0H5.2L6.6 1.8H14.5Q15 1.8 15 2.3V11.5Q15 12 14.5 12H0.5Q0 12 0 11.5Z" fill="#c8c8c8"/></svg>
<div class="t" style="left:60.5px;top:421.2px;height:20px;line-height:20px;font-size:15.7px;color:#d2d2d2;font-weight:normal;">Core RP Library</div>
<svg style="left:22.5px;top:445px;" width="9" height="10" viewBox="0 0 9 10"><path d="M0 0L9 5L0 10Z" fill="#727272"/></svg>
<svg style="left:39.5px;top:444.5px;" width="15" height="12" viewBox="0 0 15 12"><path d="M0 0.5Q0 0 0.5 0H5.2L6.6 1.8H14.5Q15 1.8 15 2.3V11.5Q15 12 14.5 12H0.5Q0 12 0 11.5Z" fill="#c8c8c8"/></svg>
<div class="t" style="left:60.5px;top:441.2px;height:20px;line-height:20px;font-size:15.7px;color:#d2d2d2;font-weight:normal;">Custom NUnit</div>
<svg style="left:22.5px;top:465px;" width="9" height="10" viewBox="0 0 9 10"><path d="M0 0L9 5L0 10Z" fill="#727272"/></svg>
<svg style="left:39.5px;top:464.5px;" width="15" height="12" viewBox="0 0 15 12"><path d="M0 0.5Q0 0 0.5 0H5.2L6.6 1.8H14.5Q15 1.8 15 2.3V11.5Q15 12 14.5 12H0.5Q0 12 0 11.5Z" fill="#c8c8c8"/></svg>
<div class="t" style="left:60.5px;top:461.2px;height:20px;line-height:20px;font-size:15.7px;color:#d2d2d2;font-weight:normal;">Input System</div>
<svg style="left:22.5px;top:485px;" width="9" height="10" viewBox="0 0 9 10"><path d="M0 0L9 5L0 10Z" fill="#727272"/></svg>
<svg style="left:39.5px;top:484.5px;" width="15" height="12" viewBox="0 0 15 12"><path d="M0 0.5Q0 0 0.5 0H5.2L6.6 1.8H14.5Q15 1.8 15 2.3V11.5Q15 12 14.5 12H0.5Q0 12 0 11.5Z" fill="#c8c8c8"/></svg>
<div class="t" style="left:60.5px;top:481.2px;height:20px;line-height:20px;font-size:15.7px;color:#d2d2d2;font-weight:normal;">JetBrains Rider Editor</div>
<svg style="left:22.5px;top:505px;" width="9" height="10" viewBox="0 0 9 10"><path d="M0 0L9 5L0 10Z" fill="#727272"/></svg>
<svg style="left:39.5px;top:504.5px;" width="15" height="12" viewBox="0 0 15 12"><path d="M0 0.5Q0 0 0.5 0H5.2L6.6 1.8H14.5Q15 1.8 15 2.3V11.5Q15 12 14.5 12H0.5Q0 12 0 11.5Z" fill="#c8c8c8"/></svg>
<div class="t" style="left:60.5px;top:501.2px;height:20px;line-height:20px;font-size:15.7px;color:#d2d2d2;font-weight:normal;">Mathematics</div>
<svg style="left:22.5px;top:525px;" width="9" height="10" viewBox="0 0 9 10"><path d="M0 0L9 5L0 10Z" fill="#727272"/></svg>
<svg style="left:39.5px;top:524.5px;" width="15" height="12" viewBox="0 0 15 12"><path d="M0 0.5Q0 0 0.5 0H5.2L6.6 1.8H14.5Q15 1.8 15 2.3V11.5Q15 12 14.5 12H0.5Q0 12 0 11.5Z" fill="#c8c8c8"/></svg>
<div class="t" style="left:60.5px;top:521.2px;height:20px;line-height:20px;font-size:15.7px;color:#d2d2d2;font-weight:normal;">Searcher</div>
</div>
<div style="left:260px;top:980px;width:1573px;height:26px;background:#3e3e3e;"></div>
<div style="left:260px;top:1006px;width:1573px;height:1px;background:#303030;"></div>
<div class="t" style="left:266px;top:981.0px;height:26px;line-height:26px;font-size:15.7px;color:#c4c4c4;font-weight:normal;">Assets</div>
<svg style="left:322px;top:986px;" width="7" height="12" viewBox="0 0 7 12"><path d="M1 1L6 6L1 11" fill="none" stroke="#9a9a9a" stroke-width="1.4"/></svg>
<div class="t" style="left:335.5px;top:981.0px;height:26px;line-height:26px;font-size:15.7px;color:#d8d8d8;font-weight:bold;">Scenes</div>
<svg style="left:282px;top:1009.5px;" width="15" height="15.94" viewBox="0 0 15 15.94"><g transform="scale(0.9375)" fill="none" stroke="#e6e6e6" stroke-width="2.3" stroke-linejoin="miter"><path d="M6.6 1.3L1.6 4.2V10.8"/><path d="M9.4 1.3L14.4 4.2V10.8"/><path d="M1.6 4.2L8 7.9L14.4 4.2"/><path d="M8 7.9V16.2"/><path d="M2.8 12.3L8 15.6L13.2 12.3"/></g></svg>
<div class="t" style="left:303px;top:1010.0px;height:20px;line-height:20px;font-size:15.7px;color:#d2d2d2;font-weight:normal;">StudyCase1-1</div>
<div style="left:260px;top:1488px;width:1573px;height:25px;background:#3e3e3e;"></div>
<div style="left:1752px;top:1499px;width:61px;height:3px;background:#5e5e5e;border-radius:1.5px"></div>
<svg style="left:1744px;top:1494px;" width="12" height="12" viewBox="0 0 12 12"><circle cx="6" cy="6" r="6" fill="#9a9a9a"/></svg>
<div style="left:1835px;top:92px;width:725px;height:1421px;background:#383838;border-top-left-radius:5px;border-top-right-radius:5px"></div>
<div style="left:1835px;top:92px;width:725px;height:24px;background:#282828;border-top-left-radius:5px;border-top-right-radius:5px"></div>
<div style="left:1835px;top:92px;width:119px;height:24px;background:#3c3c3c;border-top-left-radius:4px;border-top-right-radius:4px"></div>
<svg style="left:1847px;top:99px;" width="12.5" height="12.5" viewBox="0 0 12.5 12.5"><circle cx="6.25" cy="6.25" r="6.2" fill="#c4c4c4"/><rect x="5.2" y="5.2" width="2.1" height="5" fill="#3c3c3c"/><circle cx="6.25" cy="3.3" r="1.2" fill="#3c3c3c"/></svg>
<div class="t" style="left:1865.4px;top:93.5px;height:24px;line-height:24px;font-size:15.7px;color:#c4c4c4;font-weight:normal;">Inspector</div>
<svg style="left:1966.5px;top:98px;" width="11" height="14" viewBox="0 0 11 14"><circle cx="5.5" cy="5.3" r="5.2" fill="#c4c4c4"/><rect x="3.5" y="9" width="4" height="3" fill="#c4c4c4"/><rect x="3.8" y="12.5" width="3.4" height="1.5" fill="#c4c4c4"/></svg>
<div class="t" style="left:1984.6px;top:93.5px;height:24px;line-height:24px;font-size:15.7px;color:#c4c4c4;font-weight:normal;">Lighting</div>
<svg style="left:2515px;top:97px;" width="12" height="13" viewBox="0 0 12 13"><path d="M9.3 6.5V3.2A2.8 2.8 0 0 0 3.7 3.2" fill="none" stroke="#c4c4c4" stroke-width="1.4"/><rect x="1.2" y="6.7" width="9.6" height="5.3" fill="none" stroke="#c4c4c4" stroke-width="1.4"/></svg>
<svg style="left:2540px;top:97px;" width="4" height="13" viewBox="0 0 4 13"><circle cx="2" cy="2" r="1.6" fill="#c4c4c4"/><circle cx="2" cy="6.5" r="1.6" fill="#c4c4c4"/><circle cx="2" cy="11" r="1.6" fill="#c4c4c4"/></svg>
<div style="left:0px;top:1513px;width:2560px;height:27px;background:#191919;"></div>
<div style="left:2427px;top:1516px;width:1px;height:24px;background:#232323;"></div>
<div style="left:2460px;top:1516px;width:1px;height:24px;background:#232323;"></div>
<div style="left:2493px;top:1516px;width:1px;height:24px;background:#232323;"></div>
<div style="left:2526px;top:1516px;width:1px;height:24px;background:#232323;"></div>
<svg style="left:2435px;top:1519px;" width="18" height="18" viewBox="0 0 18 18"><ellipse cx="9" cy="11" rx="5.6" ry="6.5" fill="#c4c4c4"/><path d="M5 1.5L6.5 4.5M13 1.5L11.5 4.5M1.5 7.5L4 9M16.5 7.5L14 9M1.5 12H3.5M16.5 12H14.5M2.5 16.5L4.5 14.5M15.5 16.5L13.5 14.5" stroke="#c4c4c4" stroke-width="1.2"/><path d="M1 1L17 17" stroke="#191919" stroke-width="2.5"/><path d="M1 1L17 17" stroke="#c4c4c4" stroke-width="1.1"/></svg>
<svg style="left:2468px;top:1519px;" width="18" height="18" viewBox="0 0 18 18"><ellipse cx="8.5" cy="4" rx="7.5" ry="3.5" fill="#c4c4c4"/><path d="M1 6.5Q8.5 11 16 6.5V9.5Q8.5 14 1 9.5Z" fill="#c4c4c4"/><path d="M1 11.5Q8.5 16 16 11.5V14Q8.5 18.5 1 14Z" fill="#c4c4c4"/><path d="M1 1L17 17" stroke="#191919" stroke-width="2.5"/><path d="M1 1L17 17" stroke="#c4c4c4" stroke-width="1.1"/></svg>
<svg style="left:2501px;top:1519px;" width="18" height="18" viewBox="0 0 18 18"><path d="M3 12A7 7 0 0 1 13 2.5M15 6A7 7 0 0 1 5 15.5" fill="none" stroke="#c4c4c4" stroke-width="1.4"/><path d="M12 0.5L15.5 3L12 5Z M6 13L2.5 15L6 17.5Z" fill="#c4c4c4"/><circle cx="9" cy="8" r="3.2" fill="#c4c4c4"/><rect x="7.5" y="11" width="3" height="2.5" fill="#c4c4c4"/><path d="M1 1L17 17" stroke="#191919" stroke-width="2.5"/><path d="M1 1L17 17" stroke="#c4c4c4" stroke-width="1.1"/></svg>
<svg style="left:2533px;top:1519px;" width="18" height="18" viewBox="0 0 18 18"><circle cx="9" cy="9" r="8.2" fill="none" stroke="#c4c4c4" stroke-width="1.2"/><path d="M5 9.3L7.8 12L13 6.5" fill="none" stroke="#c4c4c4" stroke-width="1.6"/></svg>
</body></html>
